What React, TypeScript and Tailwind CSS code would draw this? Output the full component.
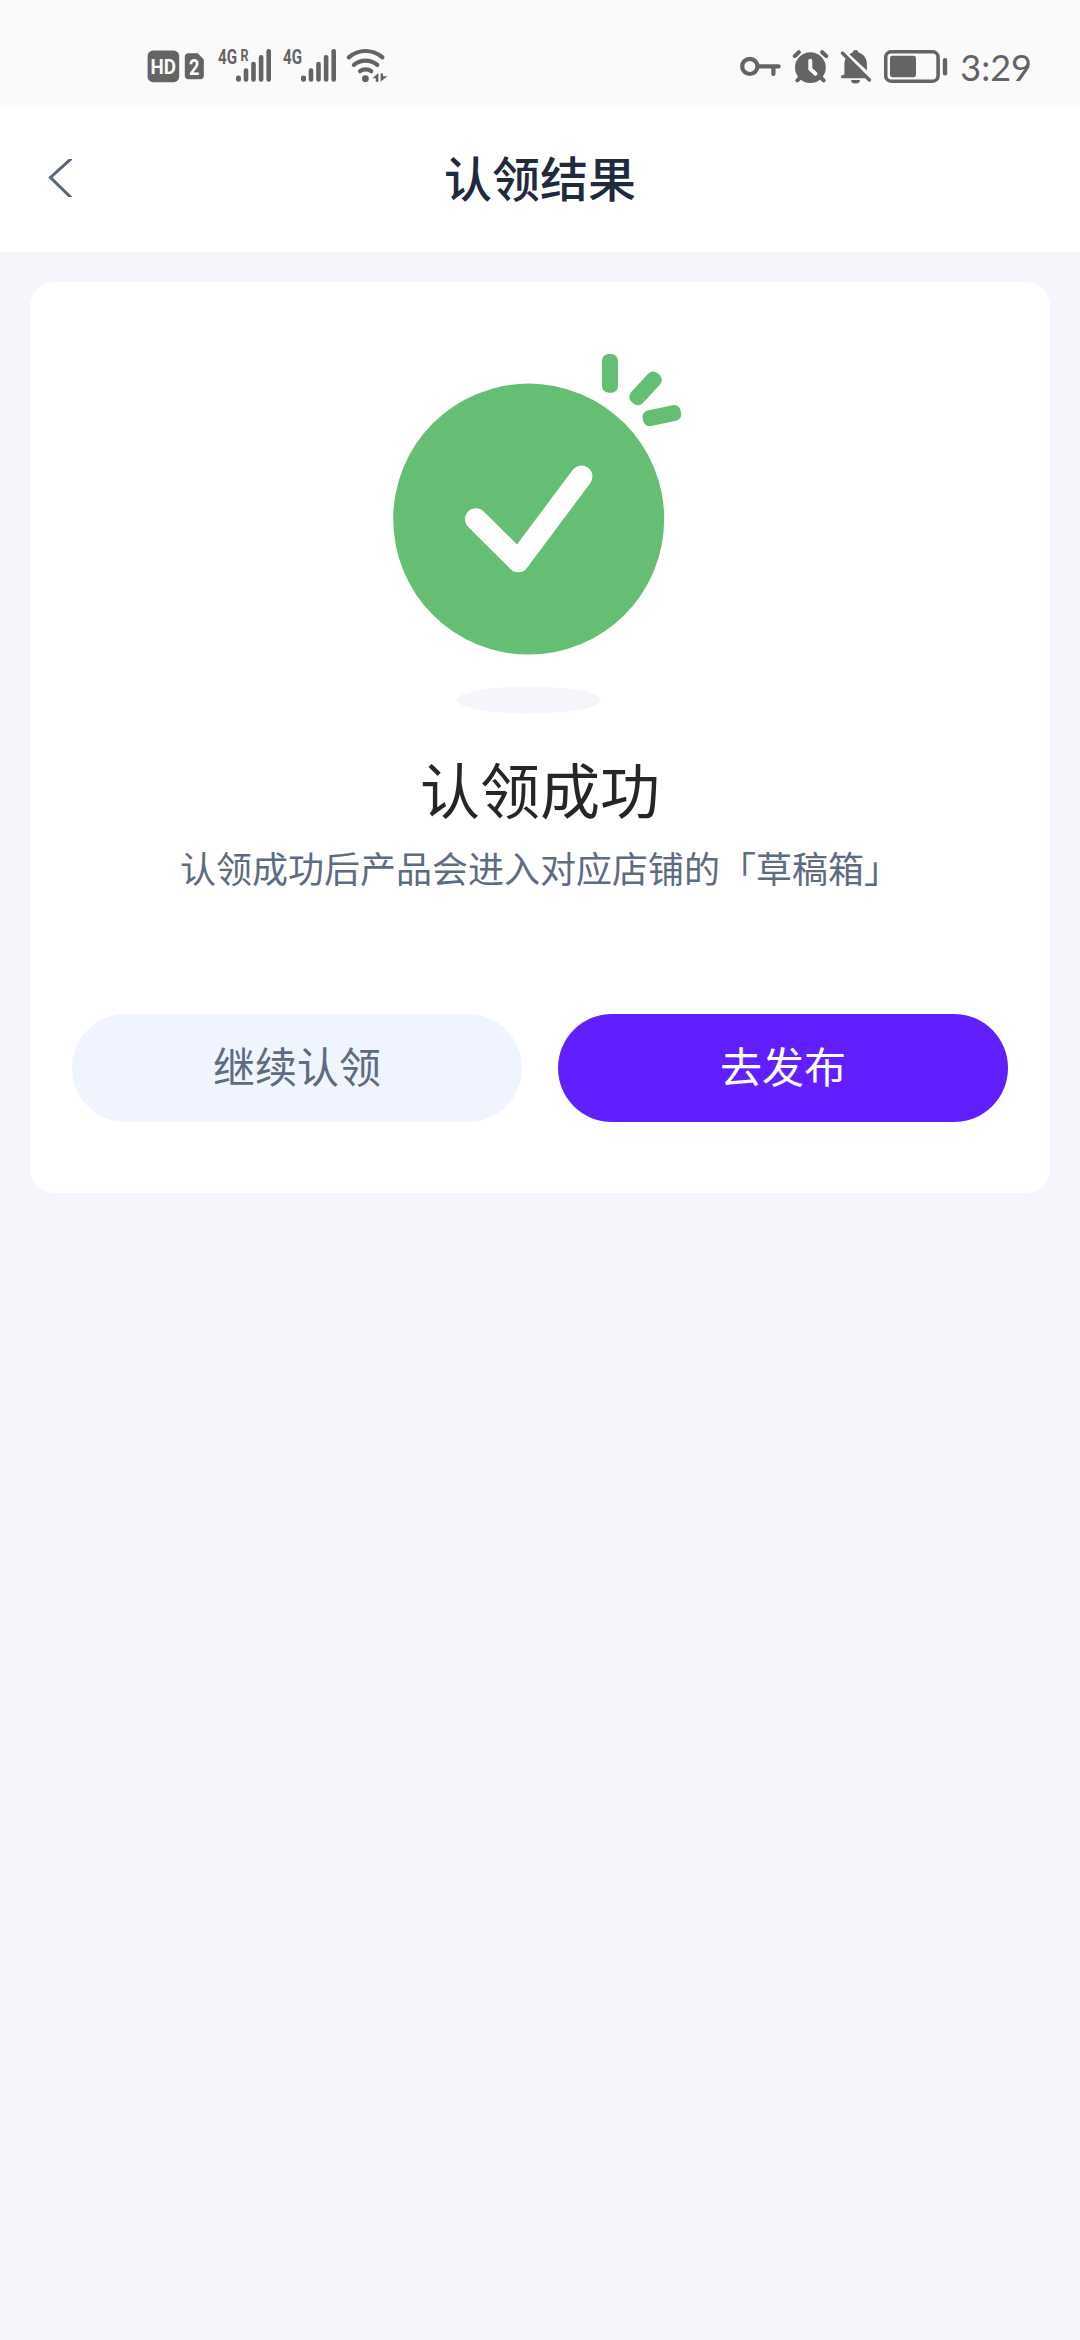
function SignalBars({ label, roaming }: { label: string; roaming?: boolean }) {
  return (
    <svg width="54" height="40" viewBox="218 46 54 40" fill="#646464" className="shrink-0">
      <text x="218" y="64" fontSize="20.5" fontWeight="700" textLength="19" lengthAdjust="spacingAndGlyphs">
        {label}
      </text>
      {roaming && (
        <text x="240.5" y="60.7" fontSize="16" fontWeight="700" textLength="8" lengthAdjust="spacingAndGlyphs">
          R
        </text>
      )}
      <rect x="236" y="75.4" width="5" height="6.4" rx="2.4" />
      <rect x="243.7" y="68.3" width="4.6" height="13.5" rx="2.2" />
      <rect x="251.2" y="61.8" width="4.6" height="20" rx="2.2" />
      <rect x="258.8" y="55" width="4.6" height="26.8" rx="2.2" />
      <rect x="266.4" y="49" width="4.6" height="32.8" rx="2.2" />
    </svg>
  )
}

function StatusBar() {
  return (
    <div className="flex h-[107px] shrink-0 items-start justify-between bg-[#fafafa] pt-[46px] pr-[48px] pl-[147px] font-['Roboto',sans-serif]">
      <div className="flex items-start">
        <svg width="58" height="40" viewBox="147 46 58 40" fill="#646464" className="mr-[13px] shrink-0">
          <rect x="147.6" y="50.6" width="31.6" height="31.6" rx="5.5" />
          <text x="150.6" y="74.3" fontSize="20" fontWeight="700" fill="#fafafa" textLength="25.5" lengthAdjust="spacingAndGlyphs">
            HD
          </text>
          <path d="M188.5 53.3h9.2l6.1 6.3v16a3.7 3.7 0 0 1-3.7 3.7h-11.6a3.7 3.7 0 0 1-3.7-3.7V57a3.7 3.7 0 0 1 3.7-3.7z" />
          <text x="189" y="75.3" fontSize="22.5" fontWeight="700" fill="#fafafa" textLength="10.4" lengthAdjust="spacingAndGlyphs">
            2
          </text>
        </svg>
        <div className="flex gap-[11px]">
          <SignalBars label="4G" roaming />
          <SignalBars label="4G" />
        </div>
        <svg width="44" height="40" viewBox="345 46 44 40" fill="none" stroke="#646464" strokeWidth="4.2" strokeLinecap="round" className="ml-2 shrink-0">
          <path d="M348.8 57.4Q356 51 365.6 51T382.4 57.4" />
          <path d="M353.9 64.8Q359 60.6 365.6 60.6T377.3 64.8" />
          <path d="M360 71.2Q362.3 69.3 365.6 69.3T371.2 71.2" />
          <circle cx="365.4" cy="78.7" r="3.4" fill="#646464" stroke="none" />
          <path d="M372.4 78.2l6-5.2v8.8h-2.6v-3.6zM380.6 81.8V75l0-1.4h2.4v2.6h4.4z" fill="#646464" stroke="none" />
        </svg>
      </div>

      <div className="flex items-start">
        <svg width="42" height="40" viewBox="739 46 42 40" fill="none" stroke="#646464" strokeWidth="4.2" className="mr-[10px] shrink-0">
          <circle cx="748.8" cy="66.4" r="7.6" />
          <path d="M757 66.4h20.6M772.4 67v7" strokeLinecap="round" />
        </svg>
        <svg width="38" height="40" viewBox="791 46 38 40" fill="none" stroke="#646464" strokeWidth="4" strokeLinecap="round" className="mr-[9px] shrink-0">
          <circle cx="809.4" cy="67.6" r="15.4" fill="#646464" stroke="none" />
          <path d="M793.8 56l4-3.8M821.2 52.2l4 3.8M796.4 80.4l3-3M822.6 80.4l-3-3" />
          <path d="M809.3 60.8v8.2l5.2 4.7" stroke="#fafafa" strokeLinejoin="round" />
        </svg>
        <svg width="34" height="40" viewBox="838 46 34 40" fill="#646464" className="mr-[11px] shrink-0">
          <path d="M848.4 54.2q1.6-1.3 3.1-1.8.5-2.4 3-2.4t3 2.4c5.2 1.5 8.4 5.8 8.4 11.4v6.8z" />
          <path d="M844.6 58.2q-1.2 2.6-1.2 5.6v10.6l-2.8 1a1.5 1.5 0 0 0 .6 2.8h23.4z" />
          <path d="M850 80h9a4.5 3.6 0 0 1-9 0z" />
          <path d="M841.4 53l27 27" stroke="#646464" strokeWidth="3.4" strokeLinecap="round" />
        </svg>
        <svg width="64" height="40" viewBox="883 46 64 40" fill="#646464" className="mr-[12px] shrink-0">
          <rect x="884.7" y="51.8" width="52.4" height="29.4" rx="5.5" fill="none" stroke="#646464" strokeWidth="3.6" />
          <rect x="889" y="55.8" width="26" height="21.4" rx="2.4" />
          <rect x="941.8" y="58" width="4.4" height="17.4" rx="2" />
        </svg>
        <span className="font-['Lato',sans-serif] text-[36px] leading-[42px] whitespace-nowrap text-[#646464]">3:29</span>
      </div>
    </div>
  )
}

function Header() {
  return (
    <header className="grid h-[145px] shrink-0 grid-cols-3 items-center bg-white pb-[3px]">
      <button type="button" className="ml-[48px] w-fit" aria-label="返回">
        <svg width="24" height="38" viewBox="0 0 24 38" fill="none" stroke="#596477" strokeWidth="3">
          <path d="M25-2L2.5 18.5 25 40.5" />
        </svg>
      </button>
      <h1 className="pb-1 text-center text-[48px] leading-[70px] font-medium text-[#1f2a3f]">认领结果</h1>
    </header>
  )
}

function SuccessIcon() {
  return (
    <svg width="300" height="370" viewBox="390 350 300 370" fill="#66be74" className="shrink-0">
      <circle cx="528.7" cy="519.1" r="135.5" />
      <path
        d="M476 519.3L518.3 561.2 581.4 476.6"
        fill="none"
        stroke="#fff"
        strokeWidth="22"
        strokeLinecap="round"
        strokeLinejoin="round"
      />
      <rect x="602" y="354" width="16" height="38.7" rx="6.6" />
      <rect x="626.2" y="380.4" width="38.7" height="16" rx="6.6" transform="rotate(-47 645.5 388.4)" />
      <rect x="642.5" y="407.6" width="38.7" height="16" rx="6.6" transform="rotate(-12 661.9 415.6)" />
      <ellipse cx="528.6" cy="700" rx="72" ry="13.5" fill="#f5f6fb" />
    </svg>
  )
}

export default function App() {
  return (
    <div className="flex h-[2340px] w-[1080px] flex-col bg-[#f5f6fb] font-['Noto_Sans_CJK_SC',sans-serif]">
      <StatusBar />
      <Header />
      <main className="mx-[30px] mt-[30px] flex h-[911px] flex-col items-center rounded-[24px] bg-white px-[42px] pt-[68px]">
        <SuccessIcon />
        <h2 className="mt-[24px] text-[60px] leading-[88px] text-[#262626]">认领成功</h2>
        <p className="mt-[9px] text-[36px] leading-[52px] whitespace-nowrap text-[#5d6b83]">
          认领成功后产品会进入对应店铺的「草稿箱」
        </p>
        <div className="mt-[121px] flex w-full gap-9">
          <button type="button" className="h-[108px] flex-1 rounded-full bg-[#eff4ff] pb-2 text-[42px] text-[#5d6b83]">
            继续认领
          </button>
          <button type="button" className="h-[108px] flex-1 rounded-full bg-[#611fff] pb-2 text-[42px] text-white">
            去发布
          </button>
        </div>
      </main>
    </div>
  )
}
